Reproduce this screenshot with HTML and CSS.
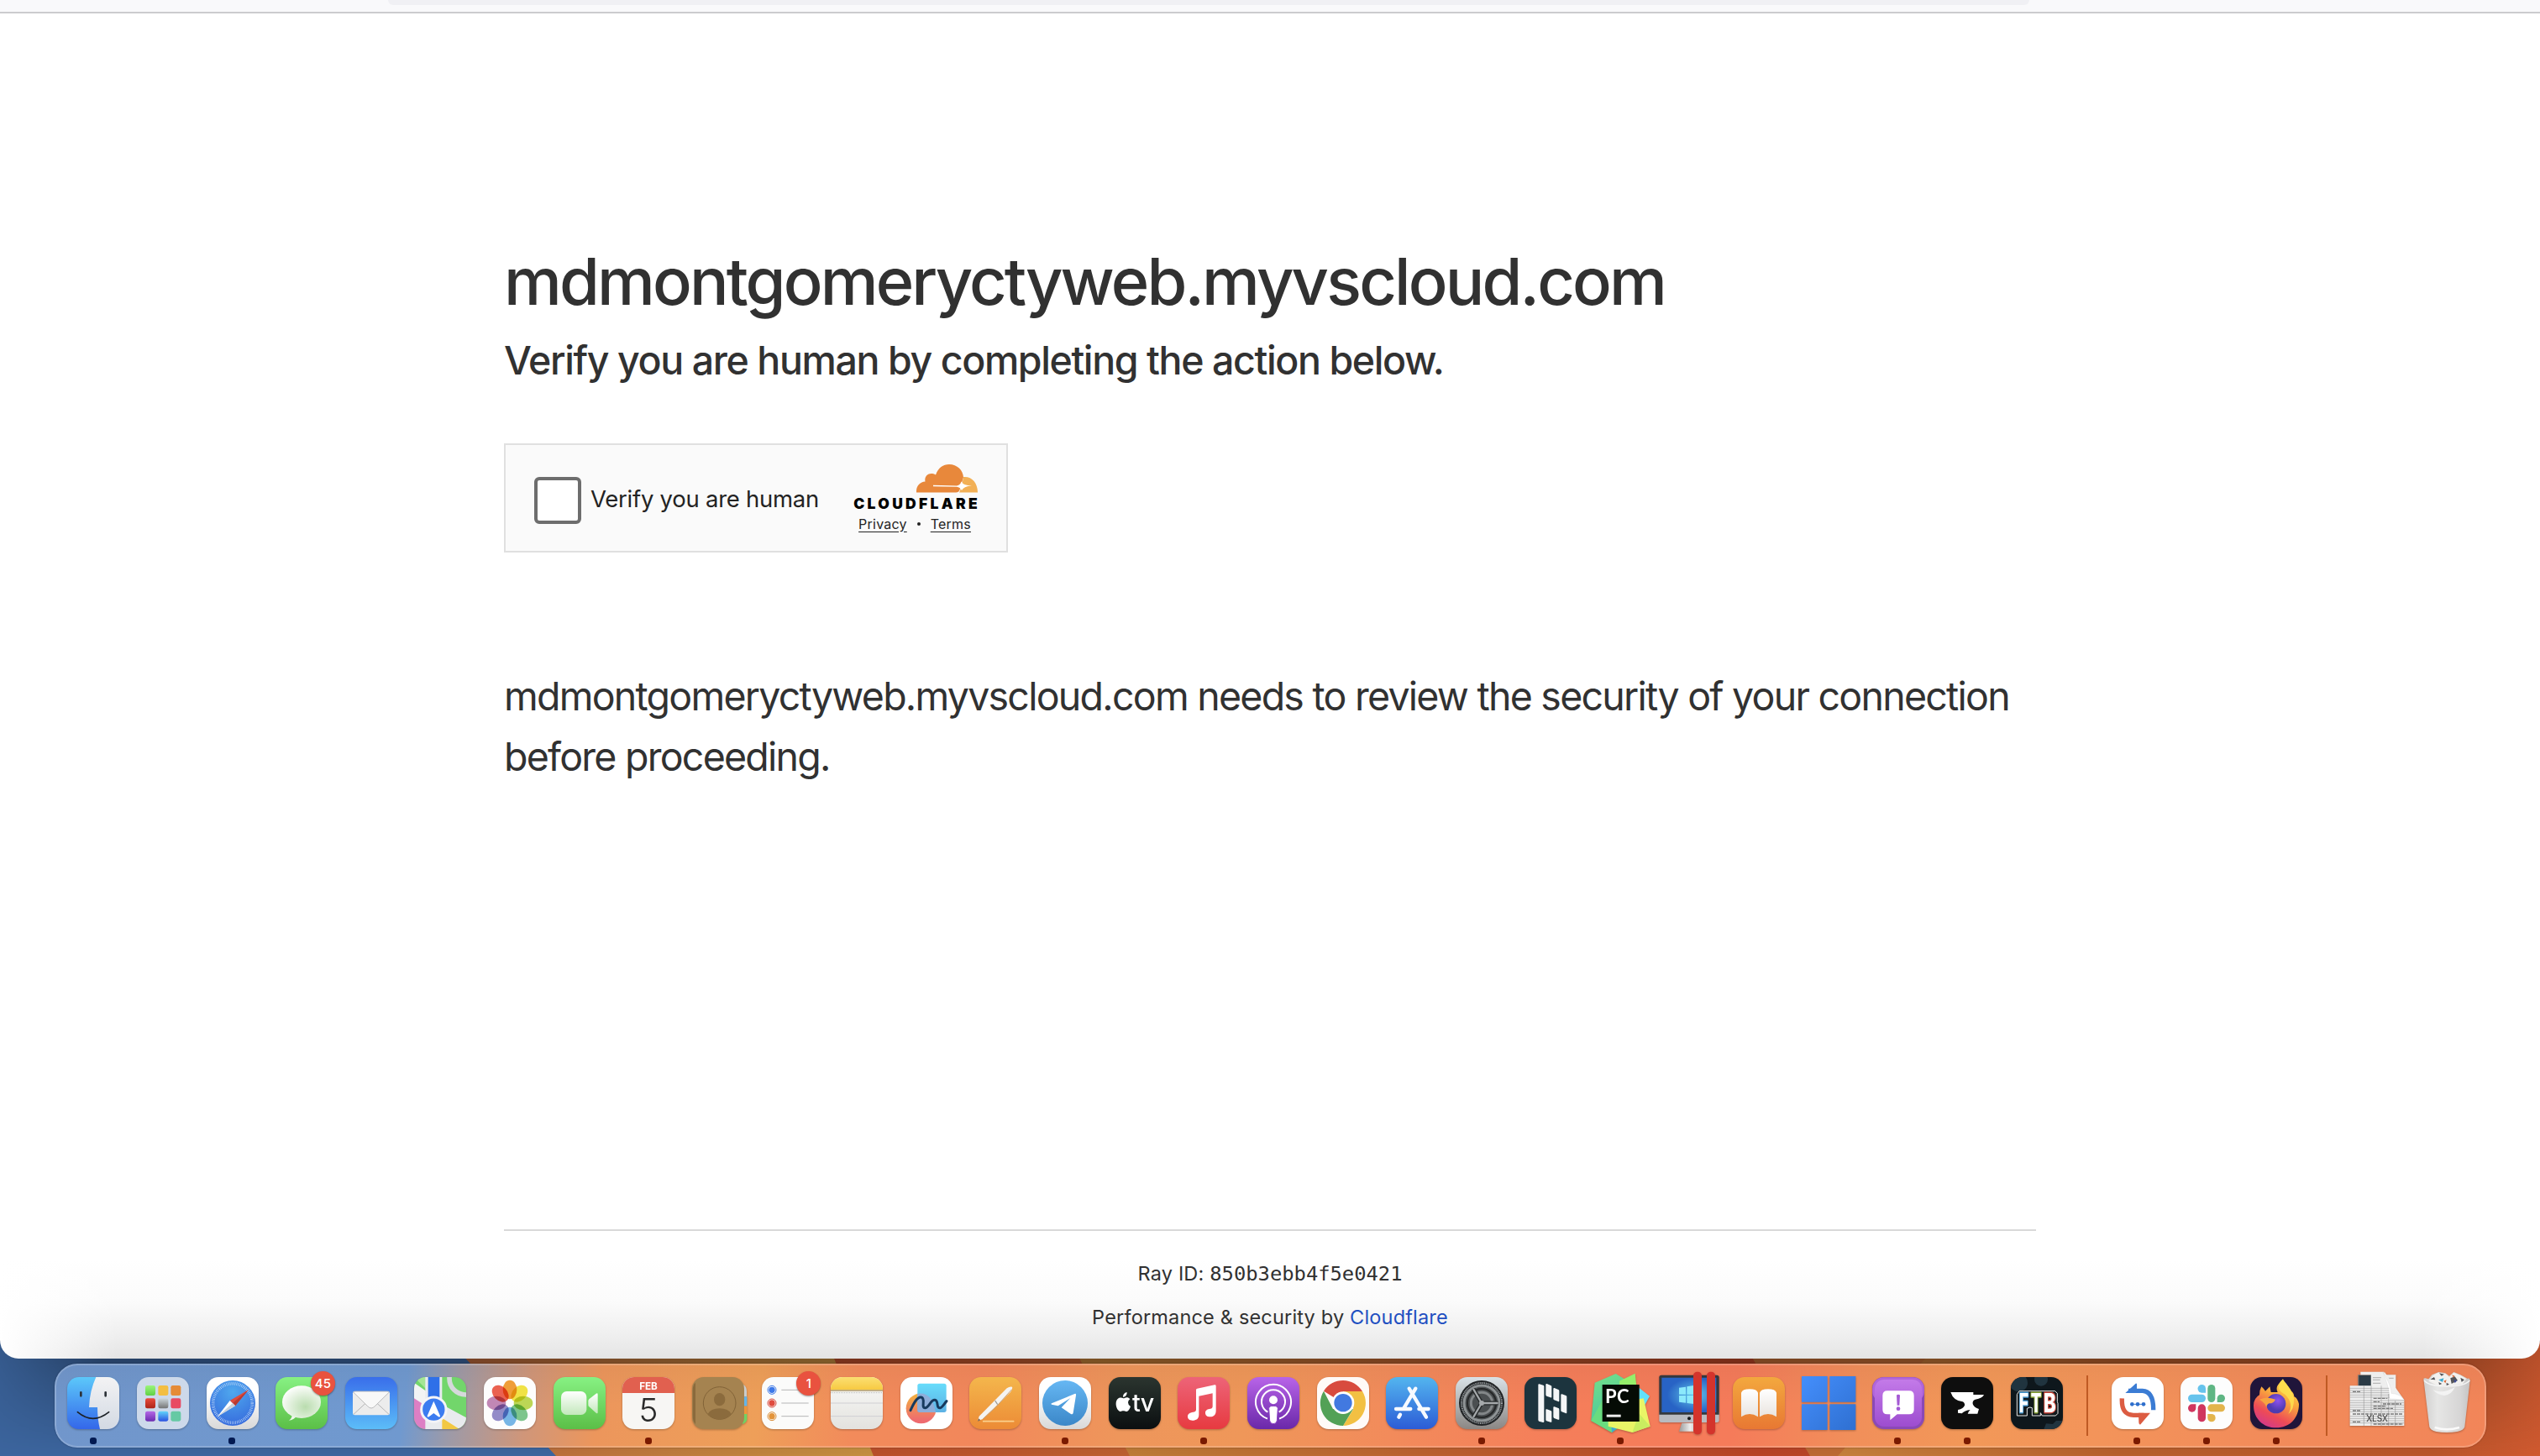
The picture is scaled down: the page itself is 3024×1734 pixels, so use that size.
FILE: index.html
```html
<!DOCTYPE html>
<html lang="en">
<head>
<meta charset="utf-8">
<title>mdmontgomeryctyweb.myvscloud.com</title>
<link rel="stylesheet" href="styles.css">
</head>
<body>
<div class="desktop">
  <main class="window">
    <div class="toolbar"><div class="urlbar"></div></div>
    <section class="content">
      <h1 class="host">mdmontgomeryctyweb.myvscloud.com</h1>
      <h2 class="lead">Verify you are human by completing the action below.</h2>
      <div class="widget">
        <span class="checkbox"></span>
        <span class="check-label">Verify you are human</span>
        <div class="brand">
          <svg class="cloud" viewBox="0 0 73 34"><path fill="#e8883b" d="M0 33.500C-.5 26 4 21 10.500 20.500C9 13 16 8.500 23 12.500C26 4 32 0 39 0C48.500 0 55.500 7 56 15.500L52 29Q51 33.500 47 33.500Z"/><path fill="#f2b056" d="M57 15C66 14.500 73 22 73 33.500H51Q53 29 54 26L56 15Z"/><path fill="#fff" d="M20 24.700L48 25.500Q52 25 53.500 20.500Q55 25 66 25.300Q56 26.500 54 31Q52 27 48 26.700L20 26.300Z"/></svg>
          <span class="wordmark">CLOUDFLARE</span>
          <div class="legal"><a>Privacy</a><i></i><a>Terms</a></div>
        </div>
      </div>
      <p class="body-text">mdmontgomeryctyweb.myvscloud.com needs to review the security of your connection<br>before proceeding.</p>
    </section>
    <footer class="footer">
      <div class="ray">Ray ID: <code>850b3ebb4f5e0421</code></div>
      <div class="perf">Performance &amp; security by <a>Cloudflare</a></div>
    </footer>
  </main>

  <div class="dock-area">
    <svg class="wallpaper" viewBox="0 0 3024 136" preserveAspectRatio="none">
      <defs>
        <linearGradient id="w1"><stop offset="0" stop-color="#b8653a"/><stop offset="1" stop-color="#c48f40"/></linearGradient>
        <linearGradient id="w2"><stop offset="0" stop-color="#b94c2a"/><stop offset="1" stop-color="#bd6331"/></linearGradient>
        <linearGradient id="w3"><stop offset="0" stop-color="#be8038"/><stop offset=".4" stop-color="#bb6230"/><stop offset=".8" stop-color="#b84326"/><stop offset="1" stop-color="#bb4b29"/></linearGradient>
        <linearGradient id="w4"><stop offset="0" stop-color="#c5803c"/><stop offset=".4" stop-color="#b8602d"/><stop offset=".85" stop-color="#ba552b"/><stop offset="1" stop-color="#d05a30"/></linearGradient>
        <linearGradient id="sh" x2="0" y2="1"><stop offset="0" stop-opacity=".42"/><stop offset=".4" stop-opacity=".25"/><stop offset="1" stop-opacity="0"/></linearGradient>
        <linearGradient id="fade"><stop offset="0" stop-color="#fff" stop-opacity=".3"/><stop offset=".04" stop-color="#fff"/><stop offset=".94" stop-color="#fff"/><stop offset="1" stop-color="#fff" stop-opacity=".3"/></linearGradient>
        <mask id="edge"><rect width="3024" height="136" fill="url(#fade)"/></mask>
      </defs>
      <path fill="#3c659e" d="M0 0H700V136H0Z"/>
      <path fill="url(#w1)" d="M536 0H1040V136H662Z"/>
      <path fill="url(#w2)" d="M985 0H1400V136H1040Z"/>
      <path fill="url(#w3)" d="M1275 0H2300V136H1345Z"/>
      <path fill="#bd6a34" d="M2075 0H2310L2190 136H2155Z"/>
      <path fill="url(#w4)" d="M2310 0H3024V136H2188Z"/>
      <rect width="3024" height="136" fill="url(#sh)" mask="url(#edge)"/>
    </svg>
    <nav class="dock">
      <div class="app running"><svg viewBox="0 0 186 186">
        <defs><linearGradient id="fi" x2="0" y2="1"><stop stop-color="#5cc8fa"/><stop offset="1" stop-color="#3467ea"/></linearGradient><linearGradient id="fr" x2="0" y2="1"><stop stop-color="#f3f3f4"/><stop offset="1" stop-color="#d3d9e3"/></linearGradient><clipPath id="sq"><rect width="186" height="186" rx="42"/></clipPath></defs>
        <g clip-path="url(#sq)"><path fill="url(#fi)" d="M0 0H186V186H0Z"/><path fill="url(#fr)" d="M103 0Q80 50 78 108H108Q108 150 117 186H186V0Z"/></g>
        <path d="M49 55V67M137 55V67" stroke="#2c3238" stroke-width="8" stroke-linecap="round"/><path d="M37 125Q92 171 149 125" fill="none" stroke="#1c2126" stroke-width="5" stroke-linecap="round"/></svg></div>

      <div class="app"><svg viewBox="0 0 186 186">
        <defs><linearGradient id="l1" x2="0" y2="1"><stop stop-color="#9af57b"/><stop offset="1" stop-color="#5fd045"/></linearGradient><linearGradient id="l5" x2="0" y2="1"><stop stop-color="#ccd6da"/><stop offset="1" stop-color="#737474"/></linearGradient><linearGradient id="l8" x2="0" y2="1"><stop stop-color="#62d5fb"/><stop offset="1" stop-color="#2a50e0"/></linearGradient><linearGradient id="l4" x2="0" y2="1"><stop stop-color="#e94b3c"/><stop offset="1" stop-color="#ab2519"/></linearGradient><linearGradient id="l7" x2="0" y2="1"><stop stop-color="#b568e6"/><stop offset="1" stop-color="#6c2bb0"/></linearGradient></defs>
        <rect width="186" height="186" rx="42" fill="#cdd9ea"/>
        <g><rect x="30" y="30" width="36" height="36" rx="7" fill="url(#l1)"/><rect x="76" y="30" width="36" height="36" rx="7" fill="#f3be42"/><rect x="121" y="30" width="36" height="36" rx="7" fill="#e58b37"/><rect x="30" y="76" width="36" height="36" rx="7" fill="url(#l4)"/><rect x="76" y="76" width="36" height="36" rx="7" fill="url(#l5)"/><rect x="121" y="76" width="36" height="36" rx="7" fill="#e84a62"/><rect x="30" y="122" width="36" height="36" rx="7" fill="url(#l7)"/><rect x="76" y="122" width="36" height="36" rx="7" fill="url(#l8)"/><rect x="121" y="122" width="36" height="36" rx="7" fill="#66c9a4"/></g></svg></div>

      <div class="app running"><svg viewBox="0 0 186 186">
        <defs><linearGradient id="wh" x2="0" y2="1"><stop offset=".3" stop-color="#fff"/><stop offset="1" stop-color="#d8d8d8"/></linearGradient><radialGradient id="sf" cx=".5" cy=".25" r=".8"><stop stop-color="#4fa8ee"/><stop offset="1" stop-color="#3568dc"/></radialGradient></defs>
        <rect width="186" height="186" rx="42" fill="url(#wh)"/><circle cx="93" cy="93" r="81" fill="url(#sf)"/><circle cx="93" cy="93" r="70" fill="none" stroke="#d9eafc" stroke-width="11" stroke-dasharray="1.700 4.409"/>
        <path fill="#de4b3d" d="M150 45L83 84L102 103Z"/><path fill="#b93a31" d="M150 45L93 93L102 103Z"/><path fill="#fff" d="M39 141L83 84L102 103Z"/><path fill="#c9d2dc" d="M39 141L93 93L102 103Z"/></svg></div>

      <div class="app"><svg viewBox="0 0 186 186">
        <defs><linearGradient id="gr" x2="0" y2="1"><stop stop-color="#87f183"/><stop offset="1" stop-color="#5bbf47"/></linearGradient><radialGradient id="bu" cx=".6" cy=".65" r=".65"><stop stop-color="#b9dcae"/><stop offset="1" stop-color="#fbfdfa"/></radialGradient></defs>
        <rect width="186" height="186" rx="42" fill="url(#gr)"/><path fill="#eef6ec" d="M58 130Q62 146 48 155Q68 152 76 138Z"/><ellipse cx="93" cy="89" rx="69" ry="58" fill="url(#bu)"/></svg><b class="badge">45</b></div>

      <div class="app"><svg viewBox="0 0 186 186">
        <defs><linearGradient id="ma" x2="0" y2="1"><stop stop-color="#396eea"/><stop offset="1" stop-color="#5cbdf8"/></linearGradient></defs>
        <rect width="186" height="186" rx="42" fill="url(#ma)"/><rect x="27" y="51" width="132" height="85" rx="7" fill="#ececec"/><path fill="none" stroke="#a9a9ab" stroke-width="2.500" d="M30 133L72 94M156 133L114 94"/><path fill="#f8f8f8" stroke="#b0b0b2" stroke-width="2.500" d="M29 54L80 104Q93 118 106 104L157 54Q155 51 150 51H36Q31 51 29 54Z"/></svg></div>

      <div class="app"><svg viewBox="0 0 186 186"><g clip-path="url(#sq)">
        <path fill="#72d66b" d="M0 0H186V186H0Z"/><path fill="#a5e695" d="M0 0H45V45Z"/><path fill="#dd7fc4" d="M0 70L60 120L42 186H0Z"/><path fill="#f2f3f4" d="M0 20L60 62V115L0 76Z"/><path fill="#f2c843" d="M98 140L165 186H98Z"/><path fill="#e9ebee" d="M40 0H100V186H40ZM100 98L186 145V186H162L95 143Z"/><path fill="#2f70e8" d="M50 0H91V90H50Z"/><circle cx="184" cy="5" r="58" fill="none" stroke="#d5d9da" stroke-width="17"/></g>
        <circle cx="70" cy="116" r="44" fill="#3c7cf0" stroke="#f4f4f7" stroke-width="9"/><path fill="#fff" d="M70 86L93 139Q93 145 86 141L70 129L54 141Q47 145 47 139Z"/></svg></div>

      <div class="app"><svg viewBox="0 0 186 186">
        <rect width="186" height="186" rx="42" fill="#fdfdfd"/>
        <g class="petals"><ellipse cx="93" cy="45" rx="25" ry="34" fill="#ef9e38"/><ellipse cx="93" cy="45" rx="25" ry="34" fill="#f0e246" transform="rotate(45 93 93)"/><ellipse cx="93" cy="45" rx="25" ry="34" fill="#bcd655" transform="rotate(90 93 93)"/><ellipse cx="93" cy="45" rx="25" ry="34" fill="#7dc58c" transform="rotate(135 93 93)"/><ellipse cx="93" cy="45" rx="25" ry="34" fill="#77b6e6" transform="rotate(180 93 93)"/><ellipse cx="93" cy="45" rx="25" ry="34" fill="#938cc8" transform="rotate(225 93 93)"/><ellipse cx="93" cy="45" rx="25" ry="34" fill="#c187b5" transform="rotate(270 93 93)"/><ellipse cx="93" cy="45" rx="25" ry="34" fill="#ea6150" transform="rotate(315 93 93)"/></g></svg></div>

      <div class="app"><svg viewBox="0 0 186 186">
        <defs><linearGradient id="fc" x2="0" y2="1"><stop stop-color="#fff"/><stop offset="1" stop-color="#c3e8bb"/></linearGradient></defs>
        <rect width="186" height="186" rx="42" fill="url(#gr)"/><rect x="27" y="51" width="91" height="84" rx="20" fill="url(#fc)"/><path fill="url(#fc)" d="M124 88Q123 83 127 79L152 59Q158 56 158 62V126Q158 132 152 128L127 106Q124 104 124 99Z"/></svg></div>

      <div class="app running"><svg viewBox="0 0 186 186">
        <rect width="186" height="186" rx="42" fill="#f7f6f4"/><g clip-path="url(#sq)"><path fill="#e1604f" d="M0 0H186V57H0Z"/></g><text class="cal-month" x="93" y="44">FEB</text><text class="cal-day" x="93" y="158">5</text></svg></div>

      <div class="app"><svg viewBox="0 0 186 186">
        <path fill="#c9cccd" d="M170 26H182Q195 34 195 50V70H170Z"/><path fill="#64b5e8" d="M180 70H196V104H180Z"/><path fill="#ee943a" d="M180 104H196V132H180Z"/><path fill="#70d263" d="M180 132H196V152Q194 162 180 168Z"/>
        <rect width="186" height="186" rx="42" fill="#a58350"/><path d="M12 20Q2 26 2 50V136Q2 160 12 168Z" fill="#8a6a3c"/><g fill="none" stroke="#826337" stroke-width="3"><circle cx="98" cy="93" r="58"/></g><g fill="#8b6b3d"><ellipse cx="98" cy="80" rx="20" ry="23"/><path d="M56 132Q66 112 98 112T140 132Q122 151 98 151T56 132Z"/></g></svg></div>

      <div class="app"><svg viewBox="0 0 186 186">
        <rect width="186" height="186" rx="42" fill="#fbfbfa"/><g stroke="#b5b5b6" stroke-width="3"><path d="M70 46H167M70 93H167M70 140H167"/></g><g fill="none" stroke-width="3"><circle cx="36" cy="46" r="15" stroke="#3c78e8"/><circle cx="36" cy="93" r="15" stroke="#d84c3f"/><circle cx="36" cy="140" r="15" stroke="#d98c35"/></g><circle cx="36" cy="46" r="11" fill="#3c78e8"/><circle cx="36" cy="93" r="11" fill="#e04c3e"/><circle cx="36" cy="140" r="11" fill="#e3943a"/></svg><b class="badge">1</b></div>

      <div class="app"><svg viewBox="0 0 186 186">
        <defs><linearGradient id="no" x2="0" y2="1"><stop stop-color="#fafaf9"/><stop offset="1" stop-color="#e3e2de"/></linearGradient><linearGradient id="ny" x2="0" y2="1"><stop stop-color="#fbdf72"/><stop offset="1" stop-color="#f7c941"/></linearGradient></defs>
        <g clip-path="url(#sq)"><path fill="url(#no)" d="M0 0H186V186H0Z"/><path fill="url(#ny)" d="M0 0H186V46H0Z"/><path d="M0 48H186" stroke="#b09a66" stroke-width="4"/><path d="M0 56H186" stroke="#b8b8b5" stroke-width="3" stroke-dasharray="3 3"/><path d="M0 93H186M0 140H186" stroke="#cfcfd3" stroke-width="3"/></g></svg></div>

      <div class="app"><svg viewBox="0 0 186 186">
        <defs><linearGradient id="ff" x2="0" y2="1"><stop stop-color="#f2b33e"/><stop offset=".9" stop-color="#ee6b70"/></linearGradient><linearGradient id="fg" x2="0" y2="1"><stop stop-color="#68dcfb"/><stop offset="1" stop-color="#5cb1e4"/></linearGradient></defs>
        <rect width="186" height="186" rx="42" fill="#fff"/><circle cx="74" cy="112" r="54" fill="url(#ff)"/><rect x="61" y="23" width="103" height="103" rx="8" fill="url(#fg)"/><path fill="#8eadd9" d="M61 60Q112 50 126 126H69Q61 126 61 118Z"/><path fill="none" stroke="#173a5e" stroke-width="9" stroke-linecap="round" stroke-linejoin="round" d="M36 119C48 92 60 70 74 72C92 75 72 110 88 110C102 110 108 80 123 82C138 84 126 112 142 110C150 109 156 95 165 86"/></svg></div>

      <div class="app"><svg viewBox="0 0 186 186">
        <defs><linearGradient id="pa" x2="0" y2="1"><stop stop-color="#f4b64c"/><stop offset="1" stop-color="#ec8b36"/></linearGradient></defs>
        <rect width="186" height="186" rx="42" fill="url(#pa)"/><path d="M50 158H158" stroke="#fbd08d" stroke-width="5" stroke-linecap="round"/><path fill="#f5f3f0" d="M30 157L35 140L134 40Q145 32 153 35Q156 40 146 55L48 150Z"/><path d="M92 84L101 98" stroke="#9b9995" stroke-width="4"/><path fill="none" stroke="#c8a37c" stroke-width="3" d="M152 44L98 104L48 150"/><path fill="#7b5c42" d="M30 158L33 148L40 154Z"/></svg></div>

      <div class="app running"><svg viewBox="0 0 186 186">
        <defs><linearGradient id="te" x2="0" y2="1"><stop stop-color="#66b7f3"/><stop offset="1" stop-color="#3b87c8"/></linearGradient></defs>
        <rect width="186" height="186" rx="42" fill="url(#wh)"/><circle cx="93" cy="93" r="81" fill="url(#te)"/><path fill="#fff" d="M45 94L127 60Q133 58 132 65L122 128Q120 135 114 132L80 109L112 75L68 103L45 98Q42 96 45 94Z"/></svg></div>

      <div class="app"><svg viewBox="0 0 186 186">
        <defs><linearGradient id="tv" x2="0" y2="1"><stop stop-color="#2b352f"/><stop offset="1" stop-color="#0b0f10"/></linearGradient></defs>
        <rect width="186" height="186" rx="42" fill="url(#tv)"/><path fill="#fff" d="M52 76C57 76 60 72 67 73Q73 74 76 79Q69 84 69 91Q69 100 78 105Q73 120 65 123C59 124 57 121 52 121S45 124 40 123C30 118 25 104 26 92C28 74 43 70 52 76ZM51 72Q50 58 65 54Q66 69 51 72Z"/><text class="tv-text" x="84" y="122">tv</text></svg></div>

      <div class="app running"><svg viewBox="0 0 186 186">
        <defs><linearGradient id="mu" x2="0" y2="1"><stop stop-color="#ed6478"/><stop offset="1" stop-color="#e73a40"/></linearGradient></defs>
        <rect width="186" height="186" rx="42" fill="url(#mu)"/><path fill="#fff" d="M66 46Q66 42 70 41L132 28Q137 27 137 32V120C137 135 129 142 116 142C105 142 99 136 99 128C99 118 107 114 117 113Q125 112 125 104V58L76 68V134C76 149 66 155 53 155C42 155 36 149 36 141C36 131 44 127 55 125Q66 124 66 116Z"/></svg></div>

      <div class="app"><svg viewBox="0 0 186 186">
        <defs><linearGradient id="po" x2="0" y2="1"><stop stop-color="#b864e8"/><stop offset="1" stop-color="#6a28a9"/></linearGradient></defs>
        <rect width="186" height="186" rx="42" fill="url(#po)"/><g fill="none" stroke="#fff" stroke-width="6"><path d="M72 149A63 63 0 1 1 114 149"/><path d="M73 125A42 42 0 1 1 113 125"/></g><circle cx="93" cy="82" r="15" fill="#fff"/><path fill="#fff" stroke="#8a3fc4" stroke-width="3" d="M77 112Q77 103 93 103T109 112L106 156Q104 167 93 167T80 156Z"/></svg></div>

      <div class="app"><svg viewBox="0 0 186 186">
        <rect width="186" height="186" rx="42" fill="#fffaf7"/><path fill="#d84b3e" d="M93 93L24 50A81 81 0 0 1 162 51H93Z"/><path fill="#f2c043" d="M93 51H162A81 81 0 0 1 93 174L130 114Z"/><path fill="#53a156" d="M24 50A81 81 0 0 0 93 174L129 114L57 114Z"/><circle cx="93" cy="92" r="40" fill="#fff"/><circle cx="93" cy="92" r="32" fill="#4279e0"/></svg></div>

      <div class="app"><svg viewBox="0 0 186 186">
        <defs><linearGradient id="as" x2="0" y2="1"><stop stop-color="#53b5ef"/><stop offset="1" stop-color="#2c5cd6"/></linearGradient></defs>
        <rect width="186" height="186" rx="42" fill="url(#as)"/><g stroke="#f7faff" stroke-width="13" stroke-linecap="round"><path d="M106 41L63 113M83 41L144 143M36 114H88M118 114H152M51 134L46 143"/></g></svg></div>

      <div class="app running"><svg viewBox="0 0 186 186">
        <defs><linearGradient id="se" x2="0" y2="1"><stop stop-color="#d9e2e7"/><stop offset="1" stop-color="#8b8784"/></linearGradient></defs>
        <rect width="186" height="186" rx="42" fill="url(#se)"/><circle cx="93" cy="93" r="81" fill="#202325"/><circle cx="93" cy="93" r="72" fill="none" stroke="#a0a5a8" stroke-width="6" stroke-dasharray="3 2.500"/><circle cx="93" cy="93" r="63" fill="#4b4f51" stroke="#8f9496" stroke-width="9"/><circle cx="93" cy="93" r="51" fill="none" stroke="#252728" stroke-width="6"/><circle cx="93" cy="93" r="38" fill="none" stroke="#838789" stroke-width="9"/><path d="M93 93H152M93 93L63 42M93 93L63 144" stroke="#272a2b" stroke-width="15"/><path d="M93 93H152M93 93L63 42M93 93L63 144" stroke="#a5a9ab" stroke-width="7"/><circle cx="93" cy="93" r="9" fill="#a5a9ab"/></svg></div>

      <div class="app"><svg viewBox="0 0 186 186">
        <rect width="186" height="186" rx="42" fill="#1c343e"/><path fill="#f4f6f7" d="M49 28Q49 24 53 25L67 29Q70 30 70 34V158Q70 163 66 162L52 158Q49 157 49 153ZM76 27Q76 23 80 24L94 30Q97 31 97 35V70Q97 75 93 73L79 68Q76 67 76 63ZM103 42Q103 38 107 39L121 45Q124 46 124 50V84Q124 89 120 87L106 82Q103 81 103 77ZM130 64Q130 60 134 61L148 66Q151 67 151 71V126Q151 131 147 129L133 124Q130 123 130 119ZM103 109Q103 104 107 106L121 111Q124 112 124 116V149Q124 154 120 152L106 147Q103 146 103 142ZM76 118Q76 113 80 115L94 120Q97 121 97 125V158Q97 163 93 161L79 157Q76 156 76 152Z"/></svg></div>

      <div class="app running"><svg viewBox="0 0 186 186">
        <defs><linearGradient id="py" x1="0" y1="0" x2=".3" y2="1"><stop stop-color="#73e18a"/><stop offset="1" stop-color="#46c3a0"/></linearGradient></defs>
        <path fill="url(#py)" d="M2 20L77-12L130 20V150L63 198L-11 156Z"/><path fill="#69dc7f" d="M-11 156L30 80L70 190L63 198Z"/><path fill="#95ef6b" d="M90 14L146-13L154 60H90Z"/><path fill="#60e2fb" d="M160 38L198 68L178 104H150Z"/><path fill="#3fa9d2" d="M60 160L100 166L63 198Z"/><path fill="#e9f566" d="M150 80L176 76L200 176L136 198L50 176V120Z"/><path fill="#c9ed60" d="M160 130L200 176L136 198Z"/><path fill="#050b05" d="M29 27H161V159H29Z"/><text class="pc-text" x="39" y="93">PC</text><path fill="#eee" d="M44 134H95V143H44Z"/></svg></div>

      <div class="app"><svg viewBox="0 0 186 186">
        <defs><radialGradient id="mo" cx=".6"><stop stop-color="#61c6ea"/><stop offset="1" stop-color="#2863c5"/></radialGradient><linearGradient id="st"><stop stop-color="#999"/><stop offset=".5" stop-color="#eee"/><stop offset="1" stop-color="#999"/></linearGradient></defs>
        <path fill="#b9bbc0" d="M-17 126H197V154Q197 162 189 162H-9Q-17 162-17 154Z"/><path fill="#34383d" d="M-9-7H189Q197-7 197 1V134H-17V1Q-17-7-9-7Z"/><path fill="url(#mo)" d="M-8 2H187V126H-8Z"/><path fill="url(#st)" d="M64 164H124L134 194H54Z"/><path fill="#8be9fb" d="M54 38L78 35V62H54ZM82 34L107 30V62H82ZM54 66H78V92L54 89ZM82 66H107V96L82 93Z"/><circle cx="90" cy="148" r="6" fill="#17191b"/><g fill="#d4342c"><rect x="105" y="-19" width="30" height="224" rx="14"/><rect x="153" y="-19" width="30" height="224" rx="14"/></g></svg></div>

      <div class="app"><svg viewBox="0 0 186 186">
        <defs><linearGradient id="bo" x2="0" y2="1"><stop stop-color="#f3a83e"/><stop offset="1" stop-color="#e87833"/></linearGradient><linearGradient id="bw" x2="0" y2="1"><stop stop-color="#fff"/><stop offset="1" stop-color="#e9e4df"/></linearGradient></defs>
        <rect width="186" height="186" rx="42" fill="url(#bo)"/><path fill="url(#bw)" d="M30 56Q34 43 60 43Q86 43 90 56V142Q60 122 30 142ZM96 56Q100 43 126 43Q152 43 156 56V142Q126 122 96 142Z"/></svg></div>

      <div class="app"><svg viewBox="0 0 186 186">
        <defs><linearGradient id="wi" x1="0" y1="0" x2="186" y2="186" gradientUnits="userSpaceOnUse"><stop stop-color="#448efb"/><stop offset="1" stop-color="#2f70d2"/></linearGradient></defs>
        <path fill="url(#wi)" d="M-3-3H89V89H-3ZM97-3H190V89H97ZM-3 97H89V189H-3ZM97 97H190V189H97Z"/></svg></div>

      <div class="app running"><svg viewBox="0 0 186 186">
        <defs><linearGradient id="fe" x2="0" y2="1"><stop stop-color="#c37ae8"/><stop offset="1" stop-color="#9d4dd0"/></linearGradient></defs>
        <rect width="186" height="186" rx="42" fill="#8a49b6"/><rect x="1" y="1" width="184" height="90" rx="40" fill="#b066da"/><rect x="9" y="9" width="168" height="168" rx="34" fill="url(#fe)"/><path fill="#fff" d="M54 49H132Q149 49 149 66V116Q149 133 132 133H89L64 154Q64 140 64 133H54Q37 133 37 116V66Q37 49 54 49Z"/><path fill="#a459d4" d="M87 66Q87 62 93 62T99 66L97 101H89Z"/><circle cx="93" cy="113" r="7" fill="#a459d4"/></svg></div>

      <div class="app running"><svg viewBox="0 0 186 186">
        <rect width="186" height="186" rx="42" fill="#0e0e0e"/><path fill="#fff" d="M34 54H115V63H153Q148 76 122 80Q111 84 113 96Q118 110 135 114L130 131H95Q98 122 104 117Q84 119 74 130L60 128V117Q80 112 84 101Q85 92 77 88Q44 85 34 54Z"/></svg></div>

      <div class="app"><svg viewBox="0 0 186 186">
        <rect width="186" height="186" rx="42" fill="#0e171c"/><g fill="#20343f" clip-path="url(#sq)"><circle cx="28" cy="20" r="32"/><circle cx="108" cy="8" r="24"/><path d="M118 186L126 166L150 168L162 156H186V186Z"/></g><path fill="#11181b" stroke="#e9ebe9" stroke-width="3" d="M30 50H158L166 58V88L168 94V130L160 138H112L106 128V138H76V110L68 108L58 112V138H22V62Z"/>
        <text class="ftb" x="29" y="127" textLength="34" lengthAdjust="spacingAndGlyphs" stroke="#4c9bd0">F</text><text class="ftb" x="71" y="127" textLength="38" lengthAdjust="spacingAndGlyphs" stroke="#8da83a">T</text><text class="ftb" x="117" y="127" textLength="44" lengthAdjust="spacingAndGlyphs" stroke="#c8463a">B</text></svg></div>

      <div class="divider"></div>

      <div class="app running"><svg viewBox="0 0 186 186">
        <rect width="186" height="186" rx="42" fill="#fff"/><path fill="none" stroke="#3b7cd4" stroke-width="16" d="M60 49H110Q150 51 149 118"/><path fill="#3b7cd4" d="M49 57L86 23Q91 22 90 28V57Z"/><path fill="none" stroke="#dc5c42" stroke-width="16" d="M37 76Q34 136 78 136H115"/><path fill="#dc5c42" d="M96 128H138L102 170Q97 169 97 162Z"/><path d="M73 97H113" stroke="#3b7cd4" stroke-width="3"/><g fill="#2f6fcc"><circle cx="73" cy="97" r="7"/><circle cx="93" cy="97" r="7"/><circle cx="114" cy="97" r="7"/></g></svg></div>

      <div class="app running"><svg viewBox="0 0 186 186">
        <rect width="186" height="186" rx="42" fill="#fdfdfd"/><g fill="#66c3ec"><path d="M76 27A14 14 0 0 0 76 56H90V41A14 14 0 0 0 76 27Z"/><rect x="27" y="62" width="63" height="28" rx="14"/></g><g fill="#5fb684"><rect x="97" y="27" width="27" height="63" rx="13.500"/><path d="M131 90V76A14 14 0 1 1 145 90Z"/></g><g fill="#e3b44c"><rect x="97" y="97" width="62" height="27" rx="13.500"/><path d="M97 132H111A14 14 0 1 1 97 146Z"/></g><g fill="#d0365f"><path d="M55 97V111A14 14 0 1 1 41 97Z"/><rect x="62" y="97" width="28" height="63" rx="14"/></g></svg></div>

      <div class="app running"><svg viewBox="0 0 186 186">
        <defs><linearGradient id="fx" x1=".8" y1="0" x2=".3" y2="1"><stop stop-color="#fde64c"/><stop offset=".4" stop-color="#f9a63d"/><stop offset=".75" stop-color="#ee4b56"/><stop offset="1" stop-color="#d4398a"/></linearGradient><radialGradient id="fp" cx=".6" cy=".35"><stop stop-color="#8d52ee"/><stop offset="1" stop-color="#4f3bb0"/></radialGradient></defs>
        <rect width="186" height="186" rx="42" fill="#20153a"/><path fill="url(#fx)" d="M33 64Q33 46 40 34Q49 42 54 50Q62 43 70 34L74 54H98C88 34 104 22 117 7C124 24 139 34 147 50Q156 56 157 70Q168 74 174 96C174 148 140 181 93 181C46 181 12 148 12 101Q13 75 33 64Z"/><circle cx="92" cy="95" r="35" fill="url(#fp)"/><path fill="#f7a440" d="M33 80Q58 68 90 80Q84 94 68 94Q58 98 58 110Q56 94 33 80Z"/><path fill="#fde04f" d="M116 8C90 38 104 50 124 62Q158 94 136 132Q158 116 156 76Q148 42 116 8Z" opacity=".85"/></svg></div>

      <div class="divider"></div>

      <div class="app"><svg viewBox="0 0 186 186">
        <path fill="#73787a" d="M25-8H140V40H25Z"/><path fill="#2b3b46" d="M28-6H70V32H28Z"/><path fill="#eee" d="M34-19H118L122-8H160V60H72V-8H34Z"/><path d="M78 2H108M78 10H104M78 22H106M128 4H152" stroke="#8c8c8c" stroke-width="2"/><path fill="#efefef" d="M-4 31H120V-18L190 82V174H-4Z"/><path fill="#fff" stroke="#ccc" stroke-width="1" d="M114-18Q146 34 144 58Q176 60 190 82Q152 78 138 78Q136 34 114-18Z"/><g stroke="#858585" stroke-width="1.500"><path d="M-4 40H136M-4 48H136M-4 56H136M-4 64H137M-4 72H138M-4 84H190M-4 92H190M-4 100H190M-4 108H190M-4 116H190M-4 124H190M-4 140H190M-4 148H190M-4 156H190M-4 164H190M46 31V174M72 31V174M108 31V174M134 60V174M158 84V174"/></g><g stroke="#777" stroke-width="4" stroke-dasharray="12 3"><path d="M6 52H36M80 76H130M80 88H102M114 96H180M80 104H126M6 120H36M6 132H186M80 112H150M6 160H36M80 168H186"/></g><text class="xlsx" x="93" y="158">XLSX</text></svg></div>

      <div class="app"><svg viewBox="0 0 186 186">
        <defs><linearGradient id="tr"><stop stop-color="#d0cfcf"/><stop offset=".3" stop-color="#e6e6e5"/><stop offset=".8" stop-color="#d6d5d5"/><stop offset="1" stop-color="#c4c3c3"/></linearGradient></defs>
        <path fill="#d9d4d0" d="M24 12L40-8L64-18L88-14L102-4L118-18L142-8L164 4L170 14Z"/><path fill="url(#tr)" d="M10 6Q14 2 24 6Q93 18 164 6Q176 2 176 12L157 178Q154 190 130 195Q93 201 56 195Q34 190 31 178Z"/>
        <path fill="#f2f1ef" d="M28 14L44-6L62-16L88-12L102 0L118-16L142-6L162 6L150 24L112 30L60 30Z"/>
        <path fill="#55565a" d="M34 8L48 0L52 10ZM66-14L84-10L74-4ZM106 4L122-2L132 12L110 24ZM142 2L156 10L146 18ZM64 18L76 24L66 28ZM92 20L102 26L92 30Z"/>
        <path fill="#38a9d0" d="M64 10L82 4L78 18Z"/><path fill="#db6a3a" d="M112-8L122-4L116 2ZM82 14L92 10L88 22Z"/><path fill="#3f4c94" d="M118 10L130 12L122 22Z"/><path d="M12 12Q30 33 93 33T175 12" fill="none" stroke="#f4f4f4" stroke-width="4"/><path d="M44 46Q78 62 122 36Q110 64 84 66Q60 64 44 46Z" fill="#f3f3f3"/><path d="M50 180Q93 194 138 180" fill="none" stroke="#fafafa" stroke-width="8"/></svg></div>
    </nav>
  </div>
</div>
</body>
</html>
```
FILE: styles.css
```css
* { box-sizing: border-box; }
body { margin: 0; font-family: Inter, "Liberation Sans", sans-serif; color: #313131; }
.desktop { width: 3024px; height: 1734px; display: flex; flex-direction: column; overflow: hidden; background: #2b4568; }

.window {
  position: relative; z-index: 1; height: 1618px; flex: none; display: flex; flex-direction: column;
  border-radius: 0 0 22px 22px; overflow: hidden;
  background:
    linear-gradient(90deg, #fff, #fff0 140px, #fff0 2884px, #fff),
    linear-gradient(#fff 1500px, #fbfbfb 1550px, #efefef 1590px, #e4e4e4 1618px);
}
.toolbar { height: 16px; flex: none; background: #f9f9fb; border-bottom: 2px solid #cbcbce; padding: 0 608px 0 462px; }
.urlbar { height: 6px; background: #f0f0f4; border-radius: 0 0 8px 8px; }
.content { width: 1824px; margin: 0 auto; flex: 1; padding-top: 274px; }
.host { margin: 0; font-size: 77.5px; font-weight: 540; line-height: 90px; white-space: nowrap; letter-spacing: -2.85px; }
.lead { margin: 13px 0 0; font-size: 46.5px; font-weight: 540; line-height: 72px; white-space: nowrap; letter-spacing: -1.4px; }
.widget { margin-top: 63px; width: 600px; height: 130px; border: 2px solid #e0e0e0; background: #fafafa; display: flex; align-items: center; padding-left: 34px; }
.checkbox { width: 56px; height: 56px; margin-top: 6px; border: 4px solid #6d6d6d; border-radius: 6px; background: #fff; }
.check-label { margin: 1px 0 0 11px; width: 276px; font-size: 27.5px; color: #232323; white-space: nowrap; letter-spacing: -.26px; }
.brand { margin-left: 33px; width: 152px; display: flex; flex-direction: column; align-items: flex-end; }
.cloud { width: 73px; height: 34px; display: block; }
.wordmark { font-size: 17.5px; font-weight: 900; color: #000; line-height: 18px; margin: 4px -3px 0 0; white-space: nowrap; letter-spacing: 3.3px; }
.legal { display: flex; align-items: center; gap: 12px; margin: 5px 8px 0 0; font-size: 16px; line-height: 20px; color: #232323; letter-spacing: .22px; }
.legal a { text-decoration: underline; text-underline-offset: 3px; }
.legal i { width: 4px; height: 4px; border-radius: 50%; background: #232323; }
.body-text { margin: 135px 0 0; font-size: 46.5px; line-height: 72px; white-space: nowrap; letter-spacing: -1.75px; }
.footer { width: 1824px; height: 154px; margin: 0 auto; border-top: 2px solid #d9d9d9; padding-top: 33px; text-align: center; font-size: 23.5px; line-height: 36px; letter-spacing: .18px; }
.ray code { font-family: "DejaVu Sans Mono", monospace; font-size: 23.8px; letter-spacing: 0; }
.perf { margin-top: 16px; }
.perf a { color: #1f4fc1; }

.dock-area { position: relative; height: 116px; flex: none; padding: 6px 64px 10px 65px; }
.wallpaper { position: absolute; left: 0; top: -20px; width: 3024px; height: 136px; }
.dock {
  position: relative; height: 100px; display: flex; padding: 16px 0 0 5px; border-radius: 27px;
  box-shadow: inset 0 0 0 2px #ffffff30, 0 0 2px #0005;
  background:
    linear-gradient(#0000000a, #0000 50%),
    linear-gradient(97deg, #7196cb 0, #7099cf 14.500%, #9d9aa8 16.500%, #cf967a 19.500%, #ec965c 22.500%, #ee9f59 29%, #f28b5b 33%, #f2875b 38%, #ee965b 44%, #ef9759 49%, #f28b5b 55%, #f57e5a 62%, #f57b5a 69%, #f18f5a 74%, #f29858 79%, #f3945a 84%, #f28c5a 90%, #f28559 100%);
}
.app { position: relative; width: 82.64px; flex: none; display: flex; justify-content: center; }
.app svg { width: 62px; height: 62px; overflow: visible; filter: drop-shadow(0 1px 1px #0004); }
.running::after { content: ""; position: absolute; left: 37px; top: 72px; width: 8px; height: 8px; border-radius: 3px; background: #7a1a00; }
.running:nth-child(-n+3)::after { background: #021a52; }
.badge { position: absolute; left: 52px; top: -7px; width: 29px; height: 29px; border-radius: 50%; background: #e9523f; box-shadow: 0 1px 2px #0006; color: #fff; font-size: 15px; font-weight: 500; line-height: 29px; text-align: center; }
.divider { width: 37.36px; flex: none; display: flex; justify-content: center; }
.divider::before { content: ""; width: 2px; height: 72px; margin-top: -2px; background: #bf5a24; }
.petals { isolation: isolate; }
.petals ellipse { mix-blend-mode: multiply; }
.cal-month { font-size: 35px; font-weight: 700; fill: #fff; text-anchor: middle; }
.cal-day { font-size: 116px; font-weight: 300; fill: #2a2a2a; text-anchor: middle; }
.tv-text { font-size: 86px; font-weight: 500; fill: #fff; letter-spacing: -2px; }
.pc-text { font: 700 66px Lato, sans-serif; fill: #fff; letter-spacing: 1px; }
.ftb { font-size: 92px; font-weight: 800; fill: #fff; stroke-width: 9px; paint-order: stroke; stroke-linejoin: round; }
.xlsx { font-size: 30px; fill: #333; text-anchor: middle; }
```
